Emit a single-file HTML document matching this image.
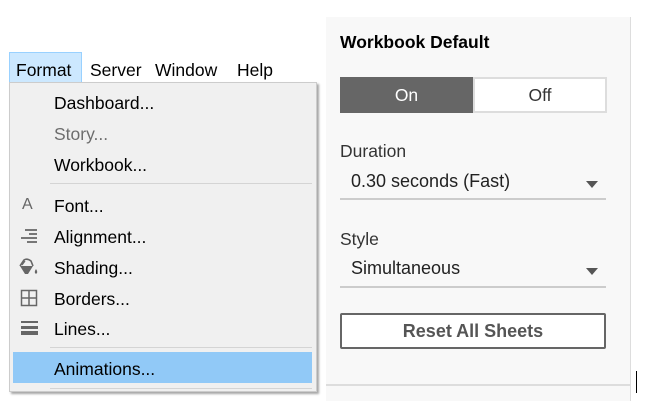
<!DOCTYPE html>
<html><head><style>
body{margin:0;width:648px;height:401px;background:#fff;position:relative;overflow:hidden;font-family:"Liberation Sans",sans-serif}
.a{position:absolute}
.mb{font-size:17.5px;color:#000;top:59px}
.mi{position:absolute;left:54px;font-size:17.5px;color:#000}
.sep{position:absolute;left:50px;width:262px;height:1px;background:#d4d4d4}
.ic{position:absolute;left:20px}
</style></head><body>
<!-- panel -->
<div class="a" style="left:326px;top:17px;width:304px;height:384px;background:#f8f8f8;border-right:1px solid #ddd"></div>
<div class="a" style="left:326px;top:384px;width:304px;height:2px;background:#ddd"></div>
<div class="a" style="left:636px;top:371px;width:1px;height:22px;background:#000"></div>
<div class="a" style="left:340px;top:32px;font-size:17.5px;font-weight:bold;color:#000">Workbook Default</div>
<div class="a" style="left:340px;top:77px;width:133px;height:36px;background:#666;color:#fff;font-size:17.5px;text-align:center;line-height:36px">On</div>
<div class="a" style="left:473px;top:77px;width:130px;height:32px;border:2px solid #ddd;background:#fff;color:#333;font-size:17.5px;text-align:center;line-height:32px">Off</div>
<div class="a" style="left:340px;top:141px;font-size:17.5px;color:#333">Duration</div>
<div class="a" style="left:351px;top:171px;font-size:18px;color:#222">0.30 seconds (Fast)</div>
<div class="a" style="left:586px;top:181px;width:0;height:0;border-left:6px solid transparent;border-right:6px solid transparent;border-top:7px solid #555"></div>
<div class="a" style="left:340px;top:198px;width:266px;height:2px;background:#ccc"></div>
<div class="a" style="left:340px;top:229px;font-size:17.5px;color:#333">Style</div>
<div class="a" style="left:351px;top:258px;font-size:18px;color:#222">Simultaneous</div>
<div class="a" style="left:586px;top:268px;width:0;height:0;border-left:6px solid transparent;border-right:6px solid transparent;border-top:7px solid #555"></div>
<div class="a" style="left:340px;top:286px;width:266px;height:2px;background:#ccc"></div>
<div class="a" style="left:340px;top:313px;width:262px;height:32px;border:2px solid #666;border-radius:2px;background:#fff;color:#555;font-weight:bold;font-size:18px;text-align:center;line-height:33px">Reset All Sheets</div>
<!-- menu bar -->
<div class="a" style="left:9px;top:52px;width:71px;height:29px;background:#cce8ff;border:1px solid #99d1ff"></div>
<div class="a mb" style="left:16px;top:60px">Format</div>
<div class="a mb" style="left:90px;top:60px">Server</div>
<div class="a mb" style="left:155px;top:60px">Window</div>
<div class="a mb" style="left:237px;top:60px">Help</div>
<!-- dropdown -->
<div class="a" style="left:9px;top:82px;width:306px;height:308px;background:#f0f0f0;border:1px solid #ccc;box-shadow:2px 2px 2px rgba(0,0,0,.35)"></div>
<div class="mi" style="top:93px">Dashboard...</div>
<div class="mi" style="top:124px;color:#6d6d6d">Story...</div>
<div class="mi" style="top:155px">Workbook...</div>
<div class="sep" style="top:183px"></div>
<div class="ic" style="top:196px;left:22px;font-size:16px;color:#666">A</div>
<div class="mi" style="top:196px">Font...</div>
<svg class="ic" style="top:228px" width="18" height="16"><g fill="#777"><rect x="5" y="1" width="12" height="2"/><rect x="9" y="5" width="8" height="2"/><rect x="1" y="9" width="16" height="2"/><rect x="7" y="13" width="10" height="2"/></g></svg>
<div class="mi" style="top:227px">Alignment...</div>
<svg class="ic" style="top:257px;left:18px" width="22" height="20"><path d="M2 9 L15 9 L10 17 L7 17 Z" fill="#666"/><path d="M2 9 L6 3 Q9 1 13 4 L15 9" fill="none" stroke="#666" stroke-width="1.6"/><path d="M4 8 L7 4" stroke="#666" stroke-width="1.2"/><path d="M18 12 q-2.5 3.5 0 5 q2.5 -1.5 0 -5" fill="#666"/></svg>
<div class="mi" style="top:258px">Shading...</div>
<svg class="ic" style="top:289px" width="18" height="18"><rect x="1.5" y="1.5" width="15" height="15" fill="none" stroke="#666" stroke-width="1.5"/><path d="M9 1v16M1 9h16" stroke="#666" stroke-width="1.5"/></svg>
<div class="mi" style="top:289px">Borders...</div>
<svg class="ic" style="top:320px" width="18" height="16"><g fill="#666"><rect x="1" y="1" width="17" height="2"/><rect x="1" y="6" width="17" height="3"/><rect x="1" y="11" width="17" height="4"/></g></svg>
<div class="mi" style="top:319px">Lines...</div>
<div class="sep" style="top:347px"></div>
<div class="a" style="left:13px;top:352px;width:299px;height:31px;background:#91c9f7"></div>
<div class="mi" style="top:359px">Animations...</div>
<div class="sep" style="top:388px"></div>
</body></html>
